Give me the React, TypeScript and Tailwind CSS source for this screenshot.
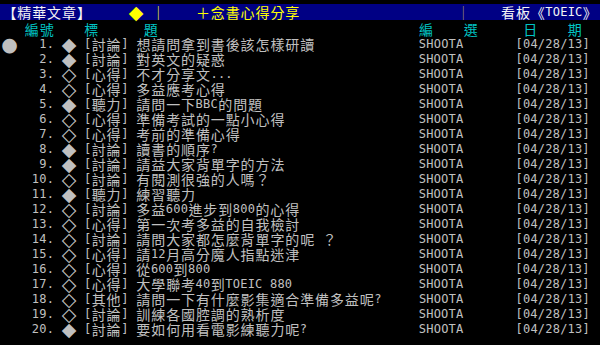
import React from "react";

type Tone = "white" | "gray" | "cyan" | "yellow" | "olive";
type Seg = [string, Tone];

const toneClass: Record<Tone, string> = {
  white: "text-[#f4f4f4]",
  gray: "text-[#c0c0c0]",
  cyan: "text-[#00c4c4]",
  yellow: "text-[#ffff00]",
  olive: "text-[#a8a460]",
};

const posts: [string, string, string][] = [
  ["◆", "討論", "想請問拿到書後該怎樣研讀"],
  ["◆", "討論", "對英文的疑惑"],
  ["◇", "心得", "不才分享文..."],
  ["◇", "心得", "多益應考心得"],
  ["◆", "聽力", "請問一下BBC的問題"],
  ["◇", "心得", "準備考試的一點小心得"],
  ["◇", "心得", "考前的準備心得"],
  ["◆", "討論", "讀書的順序?"],
  ["◆", "討論", "請益大家背單字的方法"],
  ["◇", "討論", "有閱測很強的人嗎？"],
  ["◆", "聽力", "練習聽力"],
  ["◇", "討論", "多益600進步到800的心得"],
  ["◇", "心得", "第一次考多益的自我檢討"],
  ["◇", "討論", "請問大家都怎麼背單字的呢 ？"],
  ["◇", "心得", "請12月高分魔人指點迷津"],
  ["◇", "心得", "從600到800"],
  ["◇", "心得", "大學聯考40到TOEIC 880"],
  ["◇", "其他", "請問一下有什麼影集適合準備多益呢?"],
  ["◇", "討論", "訓練各國腔調的熟析度"],
  ["◆", "討論", "要如何用看電影練聽力呢?"],
];

const symbols = "◆◇●";

// terminal column widths: ascii = 1 col, everything else = 2 cols
const cols = (s: string) => [...s].reduce((n, ch) => n + (ch.charCodeAt(0) < 128 ? 1 : 2), 0);
const pad = (s: string, n: number) => s + " ".repeat(Math.max(0, n - cols(s)));

function Cell({ ch, tone }: { ch: string; tone: Tone }) {
  if (ch.charCodeAt(0) < 128) {
    return (
      <span className={`inline-block w-[7.45px] shrink-0 text-center font-['DejaVu_Sans_Mono',monospace] text-[12px] leading-[15px] ${toneClass[tone]}`}>
        {ch}
      </span>
    );
  }
  if (symbols.includes(ch)) {
    return (
      <span className={`inline-flex h-[15px] w-[14.9px] shrink-0 items-center justify-center font-['DejaVu_Sans',sans-serif] text-[19px] leading-[15px] ${toneClass[tone]}`}>
        {ch}
      </span>
    );
  }
  return (
    <span className={`inline-block w-[14.9px] shrink-0 text-center font-['Noto_Sans_CJK_TC',sans-serif] text-[14px] leading-[15px] ${toneClass[tone]}`}>
      {ch}
    </span>
  );
}

function Cells({ segs }: { segs: Seg[] }) {
  return (
    <div className="flex h-full items-center whitespace-pre pl-[2px]">
      {segs.flatMap(([text, tone], si) =>
        [...text].map((ch, i) => <Cell key={si + "-" + i} ch={ch} tone={tone} />)
      )}
    </div>
  );
}

export default function App() {
  const header: Seg[] = [
    ["【精華文章】", "white"],
    ["     ", "white"],
    ["◆", "yellow"],
    [" ", "white"],
    ["│", "yellow"],
    ["    ", "white"],
    [pad("＋念書心得分享", 35), "yellow"],
    ["│", "olive"],
    ["    ", "white"],
    ["看板《TOEIC》", "white"],
  ];

  const colHead: Seg[] = [
    ["   編號    標      題" + " ".repeat(35) + "編    選      日    期", "cyan"],
  ];

  return (
    <div className="h-[345px] w-[600px] overflow-hidden bg-black pt-[4px]">
      <div className="h-[16px] bg-[#000084]">
        <Cells segs={header} />
      </div>
      <div className="h-[17px] pt-[2px]">
        <Cells segs={colHead} />
      </div>
      {posts.map(([mark, tag, title], i) => {
        const num = String(i + 1).padStart(4, " ") + ". ";
        const line =
          (i === 0 ? "●" : "  ") +
          num +
          mark +
          " [" +
          tag +
          "] " +
          pad(title, 38) +
          pad("SHOOTA", 13) +
          "[04/28/13]";
        return (
          <div key={i} className="h-[15px]">
            <Cells segs={[[line, "gray"]]} />
          </div>
        );
      })}
    </div>
  );
}
